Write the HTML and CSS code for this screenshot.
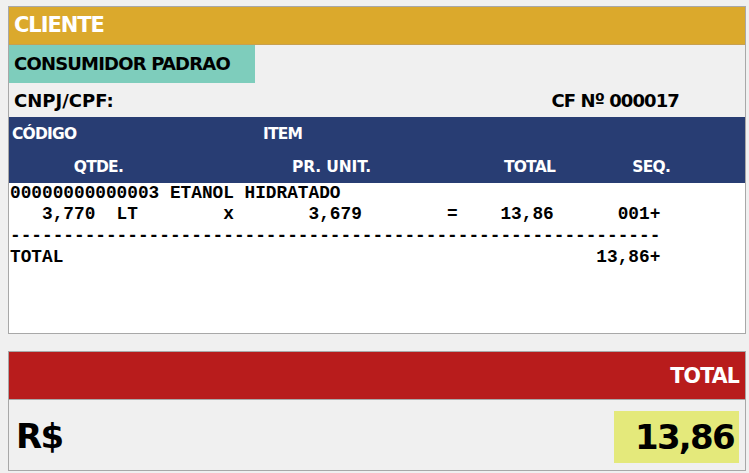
FILE: index.html
```html
<!DOCTYPE html>
<html>
<head>
<meta charset="utf-8">
<link rel="stylesheet" href="styles.css">
</head>
<body>
<div class="panel receipt">
  <div class="hdr-gold">CLIENTE</div>
  <div class="client-row"><div class="client-name">CONSUMIDOR PADRAO</div></div>
  <div class="doc-row"><span class="doc-id">CNPJ/CPF:</span><span class="doc-num">CF Nº 000017</span></div>
  <div class="cols">
    <div class="cols-r1"><span>CÓDIGO</span><span>ITEM</span></div>
    <div class="cols-r2"><span>QTDE.</span><span class="wide">PR. UNIT.</span><span>TOTAL</span><span>SEQ.</span></div>
  </div>
  <pre class="items">00000000000003 ETANOL HIDRATADO
   3,770  LT        x       3,679        =    13,86      001+
-------------------------------------------------------------
TOTAL                                                  13,86+</pre>
</div>
<div class="panel total">
  <div class="total-bar">TOTAL</div>
  <div class="total-body"><span class="cur">R$</span><span class="amount">13,86</span></div>
</div>
</body>
</html>
```

FILE: styles.css
```css
html, body {
  margin: 0;
  padding: 0;
  background: #f0f0f0;
}
body {
  padding: 6px 3px 0 8px;
  font-family: "DejaVu Sans", "Verdana", sans-serif;
  font-weight: bold;
}
.panel {
  border: 1px solid #a8a8a8;
  background: #f0f0f0;
}
.hdr-gold {
  height: 37px;
  border-bottom: 1px solid #c8a050;
  background: #dba92c;
  color: #ffffff;
  font-size: 21px;
  letter-spacing: -0.05em;
  line-height: 37px;
  padding-left: 5px;
}
.client-row {
  height: 38px;
  display: flex;
}
.client-name {
  width: 241px;
  background: #7ecdbc;
  color: #000;
  font-size: 18px;
  letter-spacing: -0.045em;
  line-height: 38px;
  padding-left: 5px;
}
.doc-row {
  height: 34px;
  display: flex;
  align-items: center;
  justify-content: space-between;
  padding: 0 66px 0 5px;
  font-size: 18px;
  color: #000;
}
.doc-id {
  letter-spacing: 0;
}
.doc-num {
  letter-spacing: -0.05em;
}
.cols {
  height: 66px;
  background: #283d73;
  color: #ffffff;
  font-size: 15.5px;
  letter-spacing: -0.05em;
}
.cols-r1 {
  height: 33px;
  display: grid;
  grid-template-columns: 251px 1fr;
  align-items: center;
  padding-left: 3px;
}
.cols-r2 {
  height: 33px;
  display: grid;
  grid-template-columns: 114px 248px 184px 115px;
  align-items: center;
  text-align: right;
}
.cols-r2 .wide {
  letter-spacing: -0.01em;
}
.items {
  margin: 0;
  height: 150px;
  box-sizing: border-box;
  background: #ffffff;
  padding: 0 0 0 1px;
  font-family: "Liberation Mono", "Courier New", monospace;
  font-size: 17.78px;
  font-weight: bold;
  line-height: 21.3px;
  color: #000;
}
.total {
  margin-top: 17px;
}
.total-bar {
  height: 47px;
  border-bottom: 1px solid #a8a8a8;
  background: #b81c1c;
  color: #ffffff;
  font-size: 20.5px;
  letter-spacing: -0.04em;
  display: flex;
  align-items: center;
  justify-content: flex-end;
  padding-right: 6px;
}
.total-body {
  height: 70px;
  display: flex;
  align-items: center;
  justify-content: space-between;
  padding: 0 6px 0 7px;
  color: #000;
}
.cur {
  font-size: 34px;
  letter-spacing: -0.05em;
  padding-top: 2px;
}
.amount {
  width: 125px;
  height: 52px;
  box-sizing: border-box;
  background: #e4e97b;
  font-size: 34px;
  letter-spacing: -0.05em;
  text-align: right;
  padding-right: 5px;
  line-height: 52px;
  margin-top: 4px;
}
```
